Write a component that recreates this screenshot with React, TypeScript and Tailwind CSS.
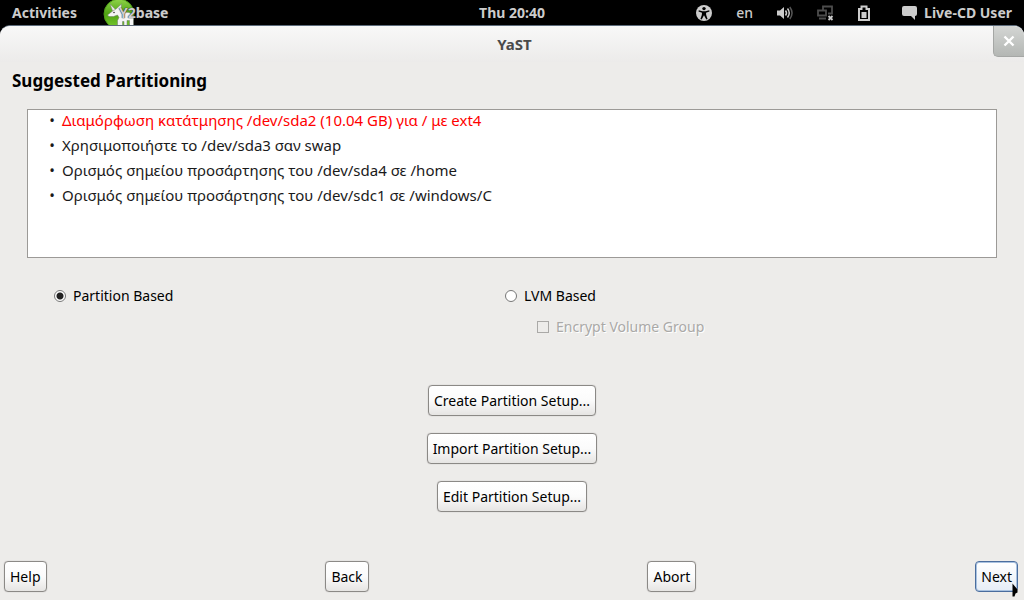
import type { ReactNode } from "react";

const STEPS = [
  { text: "Διαμόρφωση κατάτμησης /dev/sda2 (10.04 GB) για / με ext4", warn: true },
  { text: "Χρησιμοποιήστε το /dev/sda3 σαν swap", warn: false },
  { text: "Ορισμός σημείου προσάρτησης του /dev/sda4 σε /home", warn: false },
  { text: "Ορισμός σημείου προσάρτησης του /dev/sdc1 σε /windows/C", warn: false },
];

function PushButton({ children, focused = false }: { children: ReactNode; focused?: boolean }) {
  return (
    <button
      type="button"
      className={
        focused
          ? "h-[31px] px-[5px] rounded-[4px] border border-[#4a6d9e] bg-linear-to-b from-white to-[#e6edf6] shadow-[inset_0_0_0_1px_#a9c2e0] whitespace-nowrap"
          : "h-[31px] px-[5px] rounded-[4px] border border-[#8b8986] bg-linear-to-b from-white via-[#fbfbfb] to-[#e6e5e3] shadow-[0_0_1px_#a09e9b] whitespace-nowrap"
      }
    >
      {children}
    </button>
  );
}

function UnicornIcon() {
  return (
    <svg width="32" height="25" viewBox="0 0 32 25" className="shrink-0">
      <defs>
        <linearGradient id="disc" x1="0" y1="0" x2="0" y2="1">
          <stop offset="0" stopColor="#8fd34a" />
          <stop offset="0.5" stopColor="#4fa312" />
          <stop offset="1" stopColor="#7ccc32" />
        </linearGradient>
      </defs>
      <circle cx="16" cy="14" r="15" fill="url(#disc)" stroke="#4c9a16" />
      <path d="M7 4l3 8 3-2z" fill="#e8e8e8" stroke="#6f7a68" strokeWidth="0.4" />
      <path
        d="M4.500 15l4.500-3.500 4-2.500 5.500-5-.5 5.500 2 2.500 6 .5 3.500 2 1 3.500v7.500h-4v-5h-2.500v5h-3v-4h-1.500v4h-5v-5l1.500-3-1.500-2.500-4 1.500-4.500 0z"
        fill="#f4f4f4"
        stroke="#6f7a68"
        strokeWidth="0.5"
      />
      <circle cx="11" cy="12.500" r="0.8" fill="#333" />
    </svg>
  );
}

function TopBar() {
  return (
    <header className="h-[25px] flex items-center justify-between bg-black px-3 text-[14px] leading-6 font-bold text-[#cccccc]">
      <div className="flex-1 flex items-center">
        <a href="#">Activities</a>
        <a href="#" className="flex items-center ml-[26px]">
          <UnicornIcon />
          <span className="-ml-4 [text-shadow:0_0_1px_#222,0_0_1px_#222]">Y2base</span>
        </a>
      </div>
      <time>Thu 20:40</time>
      <div className="flex-1 flex items-center justify-end">
        <svg width="16" height="16" viewBox="0 0 16 16">
          <circle cx="8" cy="8" r="8" fill="#ccc" />
          <circle cx="8" cy="3.6" r="1.7" fill="#000" />
          <path d="M2.8 5.2l3.7 1h3l3.7-1 .3 1.2-3.5 1.4.2 2.2 1.4 4-1.3.5L8 10.3l-2.3 4.2-1.3-.5 1.4-4 .2-2.2-3.5-1.4z" fill="#000" />
        </svg>
        <span className="ml-6 font-medium">en</span>
        <svg width="16" height="14" viewBox="0 0 16 14" className="ml-6">
          <path d="M0 4.500h3L7 1v12L3 9.500H0z" fill="#ccc" />
          <path d="M8.500 4.500q2 2.500 0 5" fill="none" stroke="#ccc" strokeWidth="1.500" />
          <path d="M10.500 2.500q3.500 4.500 0 9" fill="none" stroke="#ccc" strokeWidth="1.500" />
          <path d="M12.800 1q4.500 6 0 12" fill="none" stroke="#555" strokeWidth="1.500" />
        </svg>
        <svg width="17" height="16" viewBox="0 0 17 16" className="ml-6">
          <path d="M6 5V1.500h9v7H11M1 5.500h8v5H1zM2 13.500h7" fill="none" stroke="#4d4d4d" strokeWidth="1.800" />
          <path d="M11.500 11l4 4m0-4l-4 4" stroke="#ccc" strokeWidth="1.800" />
        </svg>
        <svg width="12" height="16" viewBox="0 0 12 16" className="ml-6">
          <path d="M1 4h2.500V1.500h5V4H11v11H1z" fill="none" stroke="#ccc" strokeWidth="2" />
          <path d="M3.500 7h5v6h-5z" fill="#ccc" />
        </svg>
        <svg width="15" height="14" viewBox="0 0 15 14" className="ml-8">
          <path d="M2 0h11q2 0 2 2v6q0 2-2 2v4l-4-4H2q-2 0-2-2V2q0-2 2-2z" fill="#ccc" />
        </svg>
        <span className="ml-[7px]">Live-CD User</span>
      </div>
    </header>
  );
}

function TitleBar() {
  return (
    <div className="h-9 flex bg-linear-to-b from-[#f8f8f8] to-[#ecebea]">
      <h1 className="flex-1 pl-9 text-center text-[15px] leading-9 font-bold text-[#4a4a4a]">YaST</h1>
      <button
        type="button"
        aria-label="Close"
        className="w-[31px] h-[31px] flex items-center justify-center rounded-bl-[5px] rounded-tr-[9px] border-l border-b border-[#a5a7a5] bg-linear-to-b from-[#d4d6d4] to-[#b4b7b4]"
      >
        <svg width="12" height="12" viewBox="0 0 12 12">
          <path d="M1.500 1.500l9 9m0-9l-9 9" stroke="#fff" strokeWidth="2.400" />
        </svg>
      </button>
    </div>
  );
}

function App() {
  return (
    <div className="min-h-screen flex flex-col bg-black font-['Noto_Sans',sans-serif] text-[14px] leading-5 text-black">
      <TopBar />
      <div className="relative flex-1 flex flex-col rounded-t-[10px] overflow-hidden border-t border-[#5c6b7b] bg-[#edecea]">
        <TitleBar />
        <main className="flex-1 flex flex-col">
          <h2 className="pl-3 pt-[7px] text-[17px] leading-6 font-bold">Suggested Partitioning</h2>
          <ul className="mx-[27px] mt-4 h-[149px] flex flex-col gap-1 border border-[#9c9a97] bg-white pl-5 text-[15px] leading-[21px] text-[#1a1a1a]">
            {STEPS.map((s) => (
              <li key={s.text} className="flex gap-[6px]">
                <span className="w-2 text-center">•</span>
                <span className={s.warn ? "text-[#ff0000]" : ""}>{s.text}</span>
              </li>
            ))}
          </ul>

          <div className="grid grid-cols-[451px_1fr] pl-[54px] pt-7">
            <label className="flex items-center self-start gap-[7px]">
              <input
                type="radio"
                name="scheme"
                defaultChecked
                className="appearance-none size-3 rounded-full border border-[#777] bg-white checked:bg-[radial-gradient(circle,#222_3px,white_4px)]"
              />
              Partition Based
            </label>
            <div>
              <label className="flex items-center gap-[7px]">
                <input
                  type="radio"
                  name="scheme"
                  className="appearance-none size-3 rounded-full border border-[#777] bg-white checked:bg-[radial-gradient(circle,#222_3px,white_4px)]"
                />
                LVM Based
              </label>
              <label className="flex items-center gap-[7px] pl-8 mt-[11px] text-[#aaa9a7] [text-shadow:1px_1px_0_#fff]">
                <input type="checkbox" disabled className="appearance-none size-3 border border-[#aaa9a7]" />
                Encrypt Volume Group
              </label>
            </div>
          </div>

          <div className="flex flex-col items-center gap-[17px] mt-12">
            <PushButton>Create Partition Setup...</PushButton>
            <PushButton>Import Partition Setup...</PushButton>
            <PushButton>Edit Partition Setup...</PushButton>
          </div>

          <footer className="mt-auto flex justify-between pl-1 pr-[6px] pb-2">
            <PushButton>Help</PushButton>
            <PushButton>Back</PushButton>
            <PushButton>Abort</PushButton>
            <PushButton focused>Next</PushButton>
          </footer>
        </main>
        <svg width="6" height="14" viewBox="0 0 6 14" className="absolute right-[6px] bottom-[3px]">
          <path d="M0.500 0.500l5 6v3l-2 1-1 3H0.500z" fill="#000" />
        </svg>
      </div>
    </div>
  );
}

export default App;
